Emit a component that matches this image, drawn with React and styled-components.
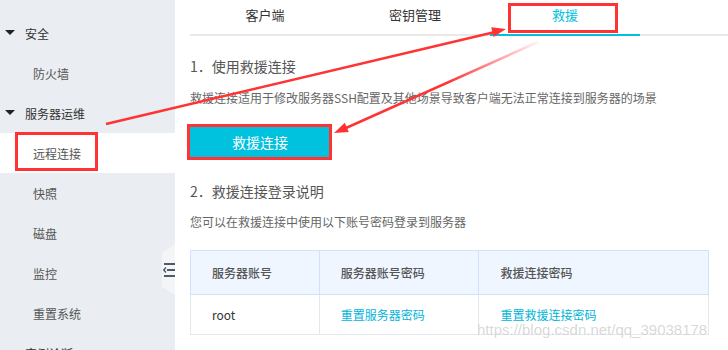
import React from "react";
import styled, { createGlobalStyle } from "styled-components";

const GlobalStyle = createGlobalStyle`
  html, body { margin: 0; padding: 0; background: #fff; }
  body { font-family: "Noto Sans CJK SC", "Noto Sans", sans-serif; overflow: hidden; }
  * { box-sizing: border-box; }
`;

const Page = styled.div`
  position: relative;
  display: flex;
  width: 728px;
  height: 350px;
  overflow: hidden;
  background: #fff;
`;

const Sidebar = styled.nav`
  position: relative;
  flex: 0 0 175px;
  background: #eaedf1;
  padding-top: 13px;
`;

const NavItem = styled.div`
  display: flex;
  align-items: center;
  height: 40px;
  padding-left: ${(p) => (p.$sub ? "33px" : "5px")};
  font-size: 12px;
  color: ${(p) => (p.$sub ? "#555" : "#333")};
  background: ${(p) => (p.$active ? "#fff" : "transparent")};
`;

const Caret = styled.span`
  display: inline-block;
  width: 0;
  height: 0;
  border-left: 5px solid transparent;
  border-right: 5px solid transparent;
  border-top: 5px solid #222;
  margin-right: 10px;
  margin-top: -1px;
`;

const Handle = styled.div`
  position: absolute;
  right: 0;
  top: 245px;
  width: 13px;
  height: 50px;
  background: #f4f5f7;
  clip-path: polygon(85% 0, 100% 0, 100% 100%, 100% 100%, 0 84%, 0 16%);
  display: flex;
  align-items: center;
  justify-content: flex-end;
`;

const Main = styled.main`
  flex: 1;
  padding-left: 15px;
  display: flex;
  flex-direction: column;
  align-items: flex-start;
`;

const Tabs = styled.div`
  display: flex;
  align-self: stretch;
  height: 36px;
  border-bottom: 2px solid #e9e9e9;
`;

const Tab = styled.div`
  width: 150px;
  text-align: center;
  font-size: 13px;
  line-height: 30px;
  color: ${(p) => (p.$active ? "#00c1de" : "#333")};
  border-bottom: 2px solid ${(p) => (p.$active ? "#00c1de" : "transparent")};
  margin-bottom: -2px;
`;

const Heading = styled.h3`
  margin: ${(p) => p.$mt}px 0 0;
  font-size: 14px;
  font-weight: normal;
  line-height: 20px;
  color: #555;
`;

const Desc = styled.p`
  margin: ${(p) => p.$mt}px 0 0;
  font-size: 12px;
  line-height: 18px;
  color: #666;
`;

const Button = styled.button`
  margin-top: 19px;
  width: 140px;
  height: 32px;
  border: none;
  background: #00c1de;
  color: #fff;
  font-family: inherit;
  font-size: 14px;
  padding: 0;
`;

const Table = styled.table`
  margin-top: 19px;
  width: 519px;
  border-collapse: collapse;
  font-size: 12px;
`;

const Th = styled.th`
  height: 44px;
  width: ${(p) => p.$w}px;
  padding: 0 0 0 21px;
  text-align: left;
  font-weight: 500;
  color: #555;
  background: #eff6ff;
  border: 1px solid #cfe4fa;
`;

const Td = styled.td`
  height: 40px;
  padding: 0 0 0 21px;
  color: #333;
  border: 1px solid #e3e8ee;
  border-top: none;
`;

const Link = styled.a`
  color: #00b4d8;
  text-decoration: none;
`;

const Watermark = styled.div`
  position: absolute;
  left: 477px;
  top: 321px;
  font-family: "Liberation Sans", Arial, sans-serif;
  font-size: 15px;
  color: rgba(120, 120, 120, 0.3);
  text-shadow: 0 0 1px #fff;
  pointer-events: none;
`;

const Overlay = styled.svg`
  position: absolute;
  left: 0;
  top: 0;
  pointer-events: none;
`;

const HandleIcon = () => (
  <svg width="12" height="14" viewBox="0 0 12 14">
    <rect x="1" y="0" width="11" height="2" fill="#4f5b6b" />
    <rect x="4" y="6" width="8" height="2" fill="#4f5b6b" />
    <path d="M3 4.5 L0.8 7 L3 9.5" fill="none" stroke="#4f5b6b" strokeWidth="1.4" />
    <rect x="1" y="12" width="11" height="2" fill="#4f5b6b" />
  </svg>
);

const menu = [
  { label: "安全", caret: true },
  { label: "防火墙", sub: true },
  { label: "服务器运维", caret: true },
  { label: "远程连接", sub: true, active: true },
  { label: "快照", sub: true },
  { label: "磁盘", sub: true },
  { label: "监控", sub: true },
  { label: "重置系统", sub: true },
  { label: "实例诊断", caret: true },
];

export default function App() {
  return (
    <>
      <GlobalStyle />
      <Page>
        <Sidebar>
          {menu.map((m) => (
            <NavItem key={m.label} $sub={m.sub} $active={m.active}>
              {m.caret && <Caret />}
              {m.label}
            </NavItem>
          ))}
          <Handle>
            <HandleIcon />
          </Handle>
        </Sidebar>
        <Main>
          <Tabs>
            <Tab>客户端</Tab>
            <Tab>密钥管理</Tab>
            <Tab $active>救援</Tab>
          </Tabs>
          <Heading $mt={20}>1．使用救援连接</Heading>
          <Desc $mt={13}>救援连接适用于修改服务器SSH配置及其他场景导致客户端无法正常连接到服务器的场景</Desc>
          <Button>救援连接</Button>
          <Heading $mt={23}>2．救援连接登录说明</Heading>
          <Desc $mt={12}>您可以在救援连接中使用以下账号密码登录到服务器</Desc>
          <Table>
            <thead>
              <tr>
                <Th $w={129}>服务器账号</Th>
                <Th $w={160}>服务器账号密码</Th>
                <Th $w={230}>救援连接密码</Th>
              </tr>
            </thead>
            <tbody>
              <tr>
                <Td>root</Td>
                <Td><Link>重置服务器密码</Link></Td>
                <Td><Link>重置救援连接密码</Link></Td>
              </tr>
            </tbody>
          </Table>
        </Main>
        <Watermark>https://blog.csdn.net/qq_39038178</Watermark>
        <Overlay width="728" height="350" viewBox="0 0 728 350">
          <defs>
            <linearGradient id="fade" gradientUnits="userSpaceOnUse" x1="538" y1="42" x2="337" y2="132">
              <stop offset="0" stopColor="#f33" stopOpacity="0.05" />
              <stop offset="0.45" stopColor="#f33" stopOpacity="1" />
              <stop offset="1" stopColor="#f33" stopOpacity="1" />
            </linearGradient>
          </defs>
          <rect x="16.5" y="133.5" width="80" height="36" fill="none" stroke="#f33" strokeWidth="3" />
          <rect x="188.5" y="125.5" width="142" height="33" fill="none" stroke="#f33" strokeWidth="3" />
          <rect x="509.5" y="4.5" width="107" height="27" fill="none" stroke="#f33" strokeWidth="3" />
          <line x1="106" y1="124" x2="495" y2="32" stroke="#f33" strokeWidth="2.5" />
          <polygon points="506,29 493.6,37.1 491.2,27.3" fill="#f33" />
          <line x1="538" y1="42" x2="346" y2="128" stroke="url(#fade)" strokeWidth="2.5" />
          <polygon points="334,133 348.8,131.9 344.8,122.7" fill="#f33" />
        </Overlay>
      </Page>
    </>
  );
}
